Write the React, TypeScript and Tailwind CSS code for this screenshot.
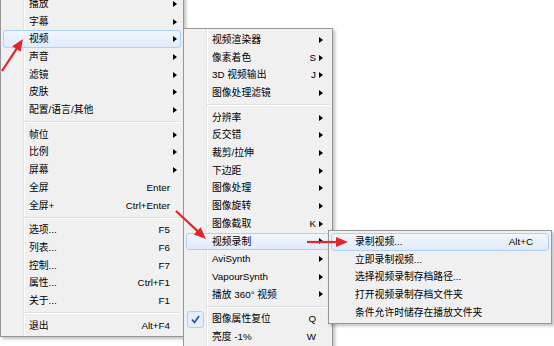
import React from "react";

type Item =
  | "sep"
  | { label: string; sc?: string; sub?: boolean; hl?: boolean; check?: boolean };

const menu1: Item[] = [
  { label: "播放", sub: true },
  { label: "字幕", sub: true },
  { label: "视频", sub: true, hl: true },
  { label: "声音", sub: true },
  { label: "滤镜", sub: true },
  { label: "皮肤", sub: true },
  { label: "配置/语言/其他", sub: true },
  "sep",
  { label: "帧位", sub: true },
  { label: "比例", sub: true },
  { label: "屏幕", sub: true },
  { label: "全屏", sc: "Enter" },
  { label: "全屏+", sc: "Ctrl+Enter" },
  "sep",
  { label: "选项...", sc: "F5" },
  { label: "列表...", sc: "F6" },
  { label: "控制...", sc: "F7" },
  { label: "属性...", sc: "Ctrl+F1" },
  { label: "关于...", sc: "F1" },
  "sep",
  { label: "退出", sc: "Alt+F4" },
];

const menu2: Item[] = [
  { label: "视频渲染器", sub: true },
  { label: "像素着色", sc: "S", sub: true },
  { label: "3D 视频输出", sc: "J", sub: true },
  { label: "图像处理滤镜", sub: true },
  "sep",
  { label: "分辨率", sub: true },
  { label: "反交错", sub: true },
  { label: "裁剪/拉伸", sub: true },
  { label: "下边距", sub: true },
  { label: "图像处理", sub: true },
  { label: "图像旋转", sub: true },
  { label: "图像截取", sc: "K", sub: true },
  { label: "视频录制", sub: true, hl: true },
  { label: "AviSynth", sub: true },
  { label: "VapourSynth", sub: true },
  { label: "播放 360° 视频", sub: true },
  "sep",
  { label: "图像属性复位", sc: "Q", check: true },
  { label: "亮度 -1%", sc: "W" },
  { label: "亮度 +1%", sc: "E" },
];

const menu3: Item[] = [
  { label: "录制视频...", sc: "Alt+C", hl: true },
  { label: "立即录制视频..." },
  { label: "选择视频录制存档路径..." },
  { label: "打开视频录制存档文件夹" },
  { label: "条件允许时储存在播放文件夹" },
];

function Check() {
  return (
    <div className="w-[17px] h-[17px] shrink-0 rounded-[3px] border border-[#aecff7] bg-[#e4edfa] flex items-center justify-center">
      <svg width="11" height="11" viewBox="0 0 11 11">
        <path d="M2 5.5 L4.5 8.5 L9 2" fill="none" stroke="#274b94" strokeWidth="1.6" />
      </svg>
    </div>
  );
}

function Menu({
  items,
  className,
  textMl,
  pr,
  gutter,
}: {
  items: Item[];
  className: string;
  textMl: string;
  pr: string;
  gutter: boolean;
}) {
  return (
    <div
      className={`absolute bg-[#f0f0f0] border border-[#979797] p-[2px] shadow-[2px_2px_3px_rgba(0,0,0,0.25)] ${className}`}
    >
      {gutter && (
        <div className="absolute top-0 bottom-0 left-[22px] w-[2px] border-l border-l-[#e2e3e3] border-r border-r-white" />
      )}
      <div className="relative flex flex-col">
        {items.map((it, i) =>
          it === "sep" ? (
            <div key={i} className="h-[7px] flex items-center">
              <div className="ml-[21px] flex-1 h-0 border-t border-t-[#e0e0e0] border-b border-b-white" />
            </div>
          ) : (
            <div
              key={i}
              className={`h-[17.7px] flex items-center border rounded-[3px] ${pr} ${
                it.hl
                  ? "border-[#aecff7] bg-linear-to-b from-[#f1f6fd] to-[#e1ebf9]"
                  : "border-transparent"
              }`}
            >
              <div className="w-[17px] shrink-0 flex items-center justify-center">
                {it.check && <Check />}
              </div>
              <span className={`${textMl} whitespace-nowrap`}>{it.label}</span>
              <span className="ml-auto whitespace-nowrap">{it.sc ?? ""}</span>
              <div className="w-[10px] shrink-0 flex items-center">
                {it.sub && (
                  <div className="ml-[3px] w-0 h-0 border-y-[3px] border-y-transparent border-l-[4px] border-l-black" />
                )}
              </div>
            </div>
          )
        )}
      </div>
    </div>
  );
}

function RedArrow({ x1, y1, x2, y2 }: { x1: number; y1: number; x2: number; y2: number }) {
  const dx = x2 - x1;
  const dy = y2 - y1;
  const len = Math.hypot(dx, dy);
  const ux = dx / len;
  const uy = dy / len;
  const hl = 12;
  const hw = 5;
  const bx = x2 - ux * hl;
  const by = y2 - uy * hl;
  const px = -uy;
  const py = ux;
  const pts = `${x2},${y2} ${bx + px * hw},${by + py * hw} ${bx - px * hw},${by - py * hw}`;
  return (
    <g>
      <line x1={x1} y1={y1} x2={bx + ux * 2} y2={by + uy * 2} stroke="#e3262b" strokeWidth="2.2" />
      <polygon points={pts} fill="#e3262b" />
    </g>
  );
}

export default function App() {
  return (
    <div className="relative w-[554px] h-[346px] overflow-hidden bg-white text-black text-[9.8px] leading-none font-['Liberation_Sans','Noto_Sans_CJK_SC',sans-serif]">
      <Menu items={menu1} className="left-0 top-[-8px] w-[184px]" textMl="ml-[8px]" pr="pr-0" gutter />
      <Menu items={menu2} className="left-[183px] top-[28px] w-[150px]" textMl="ml-[8px]" pr="pr-[3px]" gutter />
      <Menu items={menu3} className="left-[328px] top-[230px] w-[224px]" textMl="ml-[6px]" pr="pr-[5px]" gutter={false} />
      <svg className="absolute left-0 top-0 pointer-events-none" width="554" height="346">
        <RedArrow x1={2} y1={71} x2={23} y2={39} />
        <RedArrow x1={176} y1={211} x2={206} y2={239} />
        <RedArrow x1={307} y1={242} x2={348} y2={242} />
      </svg>
    </div>
  );
}
